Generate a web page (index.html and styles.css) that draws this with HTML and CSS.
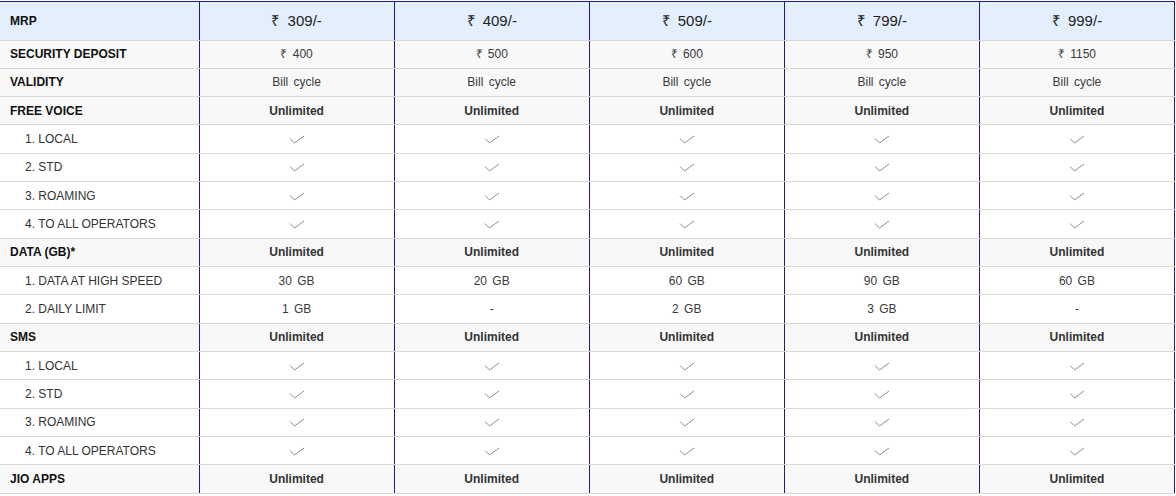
FILE: index.html
```html
<!DOCTYPE html>
<html>
<head>
<meta charset="utf-8">
<link rel="stylesheet" href="styles.css">
</head>
<body>
<table class="plans">
  <colgroup>
    <col class="c-label"><col class="c-plan"><col class="c-plan"><col class="c-plan"><col class="c-plan"><col class="c-plan">
  </colgroup>
  <tr class="head">
    <th class="label">MRP</th>
    <td class="price">₹ 309/-</td><td class="price">₹ 409/-</td><td class="price">₹ 509/-</td><td class="price">₹ 799/-</td><td class="price">₹ 999/-</td>
  </tr>
  <tr class="main">
    <th class="label">SECURITY DEPOSIT</th>
    <td>₹ 400</td><td>₹ 500</td><td>₹ 600</td><td>₹ 950</td><td>₹ 1150</td>
  </tr>
  <tr class="main">
    <th class="label">VALIDITY</th>
    <td>Bill cycle</td><td>Bill cycle</td><td>Bill cycle</td><td>Bill cycle</td><td>Bill cycle</td>
  </tr>
  <tr class="main">
    <th class="label">FREE VOICE</th>
    <td class="b">Unlimited</td><td class="b">Unlimited</td><td class="b">Unlimited</td><td class="b">Unlimited</td><td class="b">Unlimited</td>
  </tr>
  <tr class="sub">
    <th class="sublabel">1. LOCAL</th>
    <td><svg class="tick" viewBox="0 0 16 9"><path d="M1 3.5 L5.5 8 L15 1"/></svg></td><td><svg class="tick" viewBox="0 0 16 9"><path d="M1 3.5 L5.5 8 L15 1"/></svg></td><td><svg class="tick" viewBox="0 0 16 9"><path d="M1 3.5 L5.5 8 L15 1"/></svg></td><td><svg class="tick" viewBox="0 0 16 9"><path d="M1 3.5 L5.5 8 L15 1"/></svg></td><td><svg class="tick" viewBox="0 0 16 9"><path d="M1 3.5 L5.5 8 L15 1"/></svg></td>
  </tr>
  <tr class="sub">
    <th class="sublabel">2. STD</th>
    <td><svg class="tick" viewBox="0 0 16 9"><path d="M1 3.5 L5.5 8 L15 1"/></svg></td><td><svg class="tick" viewBox="0 0 16 9"><path d="M1 3.5 L5.5 8 L15 1"/></svg></td><td><svg class="tick" viewBox="0 0 16 9"><path d="M1 3.5 L5.5 8 L15 1"/></svg></td><td><svg class="tick" viewBox="0 0 16 9"><path d="M1 3.5 L5.5 8 L15 1"/></svg></td><td><svg class="tick" viewBox="0 0 16 9"><path d="M1 3.5 L5.5 8 L15 1"/></svg></td>
  </tr>
  <tr class="sub">
    <th class="sublabel">3. ROAMING</th>
    <td><svg class="tick" viewBox="0 0 16 9"><path d="M1 3.5 L5.5 8 L15 1"/></svg></td><td><svg class="tick" viewBox="0 0 16 9"><path d="M1 3.5 L5.5 8 L15 1"/></svg></td><td><svg class="tick" viewBox="0 0 16 9"><path d="M1 3.5 L5.5 8 L15 1"/></svg></td><td><svg class="tick" viewBox="0 0 16 9"><path d="M1 3.5 L5.5 8 L15 1"/></svg></td><td><svg class="tick" viewBox="0 0 16 9"><path d="M1 3.5 L5.5 8 L15 1"/></svg></td>
  </tr>
  <tr class="sub">
    <th class="sublabel">4. TO ALL OPERATORS</th>
    <td><svg class="tick" viewBox="0 0 16 9"><path d="M1 3.5 L5.5 8 L15 1"/></svg></td><td><svg class="tick" viewBox="0 0 16 9"><path d="M1 3.5 L5.5 8 L15 1"/></svg></td><td><svg class="tick" viewBox="0 0 16 9"><path d="M1 3.5 L5.5 8 L15 1"/></svg></td><td><svg class="tick" viewBox="0 0 16 9"><path d="M1 3.5 L5.5 8 L15 1"/></svg></td><td><svg class="tick" viewBox="0 0 16 9"><path d="M1 3.5 L5.5 8 L15 1"/></svg></td>
  </tr>
  <tr class="main">
    <th class="label">DATA (GB)*</th>
    <td class="b">Unlimited</td><td class="b">Unlimited</td><td class="b">Unlimited</td><td class="b">Unlimited</td><td class="b">Unlimited</td>
  </tr>
  <tr class="sub">
    <th class="sublabel">1. DATA AT HIGH SPEED</th>
    <td>30 GB</td><td>20 GB</td><td>60 GB</td><td>90 GB</td><td>60 GB</td>
  </tr>
  <tr class="sub">
    <th class="sublabel">2. DAILY LIMIT</th>
    <td>1 GB</td><td>-</td><td>2 GB</td><td>3 GB</td><td>-</td>
  </tr>
  <tr class="main">
    <th class="label">SMS</th>
    <td class="b">Unlimited</td><td class="b">Unlimited</td><td class="b">Unlimited</td><td class="b">Unlimited</td><td class="b">Unlimited</td>
  </tr>
  <tr class="sub">
    <th class="sublabel">1. LOCAL</th>
    <td><svg class="tick" viewBox="0 0 16 9"><path d="M1 3.5 L5.5 8 L15 1"/></svg></td><td><svg class="tick" viewBox="0 0 16 9"><path d="M1 3.5 L5.5 8 L15 1"/></svg></td><td><svg class="tick" viewBox="0 0 16 9"><path d="M1 3.5 L5.5 8 L15 1"/></svg></td><td><svg class="tick" viewBox="0 0 16 9"><path d="M1 3.5 L5.5 8 L15 1"/></svg></td><td><svg class="tick" viewBox="0 0 16 9"><path d="M1 3.5 L5.5 8 L15 1"/></svg></td>
  </tr>
  <tr class="sub">
    <th class="sublabel">2. STD</th>
    <td><svg class="tick" viewBox="0 0 16 9"><path d="M1 3.5 L5.5 8 L15 1"/></svg></td><td><svg class="tick" viewBox="0 0 16 9"><path d="M1 3.5 L5.5 8 L15 1"/></svg></td><td><svg class="tick" viewBox="0 0 16 9"><path d="M1 3.5 L5.5 8 L15 1"/></svg></td><td><svg class="tick" viewBox="0 0 16 9"><path d="M1 3.5 L5.5 8 L15 1"/></svg></td><td><svg class="tick" viewBox="0 0 16 9"><path d="M1 3.5 L5.5 8 L15 1"/></svg></td>
  </tr>
  <tr class="sub">
    <th class="sublabel">3. ROAMING</th>
    <td><svg class="tick" viewBox="0 0 16 9"><path d="M1 3.5 L5.5 8 L15 1"/></svg></td><td><svg class="tick" viewBox="0 0 16 9"><path d="M1 3.5 L5.5 8 L15 1"/></svg></td><td><svg class="tick" viewBox="0 0 16 9"><path d="M1 3.5 L5.5 8 L15 1"/></svg></td><td><svg class="tick" viewBox="0 0 16 9"><path d="M1 3.5 L5.5 8 L15 1"/></svg></td><td><svg class="tick" viewBox="0 0 16 9"><path d="M1 3.5 L5.5 8 L15 1"/></svg></td>
  </tr>
  <tr class="sub">
    <th class="sublabel">4. TO ALL OPERATORS</th>
    <td><svg class="tick" viewBox="0 0 16 9"><path d="M1 3.5 L5.5 8 L15 1"/></svg></td><td><svg class="tick" viewBox="0 0 16 9"><path d="M1 3.5 L5.5 8 L15 1"/></svg></td><td><svg class="tick" viewBox="0 0 16 9"><path d="M1 3.5 L5.5 8 L15 1"/></svg></td><td><svg class="tick" viewBox="0 0 16 9"><path d="M1 3.5 L5.5 8 L15 1"/></svg></td><td><svg class="tick" viewBox="0 0 16 9"><path d="M1 3.5 L5.5 8 L15 1"/></svg></td>
  </tr>
  <tr class="main last">
    <th class="label">JIO APPS</th>
    <td class="b">Unlimited</td><td class="b">Unlimited</td><td class="b">Unlimited</td><td class="b">Unlimited</td><td class="b">Unlimited</td>
  </tr>
</table>
</body>
</html>
```

FILE: styles.css
```css
html, body {
  margin: 0;
  padding: 0;
  background: #ffffff;
}

body {
  padding-top: 1px;
  font-family: "Liberation Sans", Arial, Helvetica, sans-serif;
  color: #333333;
}

.plans {
  border-collapse: collapse;
  table-layout: fixed;
  width: 1175px;
  font-size: 12px;
}

.c-label { width: 199px; }
.c-plan { width: 195px; }

.plans th,
.plans td {
  padding: 0;
  height: 27.33px;
  border-bottom: 1px solid #d9d9d9;
  vertical-align: middle;
  line-height: 14px;
}

.plans td {
  text-align: center;
  border-left: 1px solid #24188a;
  border-right: 1px solid #24188a;
  word-spacing: 2px;
  color: #3a3a3a;
}

.plans th {
  text-align: left;
  font-weight: normal;
}

.plans .label {
  padding-left: 10px;
  font-weight: bold;
  color: #111111;
}

.plans .sublabel {
  padding-left: 25px;
  color: #333333;
}

.head th,
.head td {
  height: 37.5px;
  background: #e3effc;
  border-top: 1px solid #24188a;
  border-bottom: 1px solid #d6d6d6;
}

.head .price {
  font-size: 15px;
  color: #222222;
  word-spacing: 3px;
}

.main th,
.main td {
  background: #f8f8f8;
}

.sub th,
.sub td {
  background: #ffffff;
}

.plans td.b {
  font-weight: bold;
  word-spacing: 0;
  color: #333333;
}

.tick {
  display: block;
  margin: 1px auto 0;
  width: 16px;
  height: 9px;
  fill: none;
  stroke: #808080;
  stroke-width: 0.9;
}
```
